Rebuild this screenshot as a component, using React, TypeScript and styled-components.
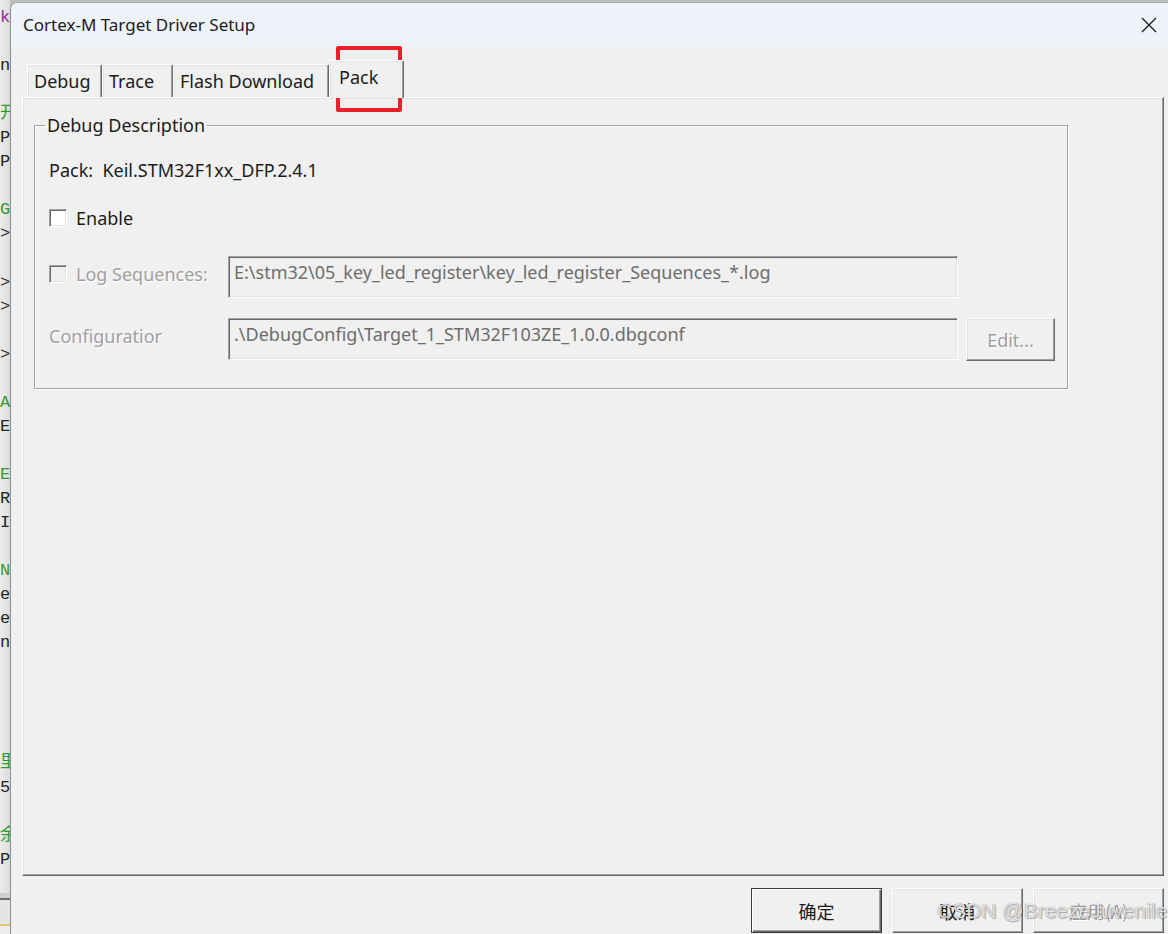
import React from "react";
import styled, { createGlobalStyle } from "styled-components";

const UI_FONT = `"Noto Sans", "Noto Sans CJK SC", sans-serif`;

const Global = createGlobalStyle`
  html, body { margin: 0; padding: 0; background: #bdbdbd; overflow: hidden; }
  #root { width: 1168px; height: 934px; }
`;

const Screen = styled.div`
  position: relative;
  width: 1168px;
  height: 934px;
  display: flex;
  overflow: hidden;
  background: #bdbdbd;
  font-family: ${UI_FONT};
`;

/* ---------- editor behind the dialog ---------- */
const EditorStrip = styled.div`
  width: 10px;
  flex: none;
  overflow: hidden;
  display: flex;
  flex-direction: column;
  padding-top: 6px;
  box-sizing: border-box;
  background: linear-gradient(to right, #ececec, #dcdcdc);
  font-family: "Liberation Mono", "Noto Sans CJK SC", monospace;
  font-size: 17px;
`;

const CodeLine = styled.div<{ $c: string }>`
  height: 24.06px;
  line-height: 24px;
  white-space: nowrap;
  color: ${(p) => p.$c};
`;

const StripFooter = styled.div`
  margin-top: auto;
  height: 41px;
  flex: none;
  background: linear-gradient(
    to bottom,
    #cfcfcf 0 5px,
    #6e6e6e 5px 7px,
    #e4e4e4 7px 31px,
    #e6c36a 31px 33px,
    #ececec 33px
  );
`;

/* ---------- dialog ---------- */
const Dialog = styled.div`
  flex: 1;
  display: flex;
  flex-direction: column;
  margin-top: 2px;
  border-left: 1px solid #8d8d8d;
  border-top: 1px solid #a9a9a9;
  border-top-left-radius: 7px;
  background: #f0f0f0;
  overflow: hidden;
`;

const TitleBar = styled.div`
  height: 44px;
  flex: none;
  display: flex;
  align-items: center;
  justify-content: space-between;
  padding: 0 11px 0 12px;
  background: #eef3f9;
`;

const Title = styled.div`
  font-size: 17px;
  color: #1b1b1b;
  margin-top: -2px;
`;

const CloseIcon = styled.svg`
  width: 16px;
  height: 16px;
  margin-top: -1px;
`;

const Body = styled.div`
  flex: 1;
  display: flex;
  flex-direction: column;
  padding: 13px 4px 1px 11px;
`;

const TabRow = styled.div`
  display: flex;
  align-items: flex-end;
  height: 37px;
  padding-left: 5px;
  position: relative;
  z-index: 1;
`;

const Tab = styled.div<{ $w: number; $active?: boolean }>`
  width: ${(p) => p.$w}px;
  height: ${(p) => (p.$active ? 38 : 33)}px;
  margin-bottom: ${(p) => (p.$active ? -1 : 0)}px;
  box-sizing: border-box;
  display: flex;
  align-items: ${(p) => (p.$active ? "flex-start" : "center")};
  padding-left: ${(p) => (p.$active ? 9 : 6)}px;
  padding-top: ${(p) => (p.$active ? 4 : 0)}px;
  font-size: 18px;
  color: #1b1b1b;
  white-space: nowrap;
  background: #f0f0f0;
  border-top: 1px solid #ffffff;
  border-left: 1px solid #ffffff;
  border-right: 1px solid #696969;
  box-shadow: inset -1px 0 0 #a0a0a0, inset 1px 1px 0 #e3e3e3;
  border-top-left-radius: 2px;
  border-top-right-radius: 2px;
`;

const Panel = styled.div`
  flex: 1;
  box-sizing: border-box;
  border-top: 1px solid #ffffff;
  border-left: 1px solid #ffffff;
  border-right: 1px solid #696969;
  border-bottom: 1px solid #696969;
  box-shadow: inset -1px -1px 0 #a0a0a0, inset 1px 1px 0 #e3e3e3;
  padding: 16px 0 0 11px;
`;

const Group = styled.fieldset`
  width: 1034px;
  box-sizing: border-box;
  margin: 0;
  padding: 0 0 27px 14px;
  border: 1px solid #a0a0a0;
  box-shadow: 1px 1px 0 #ffffff, inset 1px 1px 0 #ffffff;
`;

const Legend = styled.legend`
  margin-left: -4px;
  padding: 0 2px;
  font-size: 18px;
  line-height: 23px;
  color: #1b1b1b;
`;

const TextRow = styled.div<{ $mt: number }>`
  display: flex;
  align-items: center;
  gap: 9px;
  height: 24px;
  margin-top: ${(p) => p.$mt}px;
  font-size: 18px;
  color: #1b1b1b;
  white-space: pre;
`;

const Check = styled.span<{ $disabled?: boolean }>`
  width: 18px;
  height: 18px;
  box-sizing: border-box;
  flex: none;
  background: ${(p) => (p.$disabled ? "#f0f0f0" : "#ffffff")};
  border-top: 1px solid #a0a0a0;
  border-left: 1px solid #a0a0a0;
  border-right: 1px solid #ffffff;
  border-bottom: 1px solid #ffffff;
  box-shadow: inset 1px 1px 0 #696969, inset -1px -1px 0 #e3e3e3;
`;

const FieldGrid = styled.div<{ $mt: number }>`
  display: grid;
  grid-template-columns: 171px 730px 89px;
  column-gap: 8px;
  margin-top: ${(p) => p.$mt}px;
`;

const FieldLabel = styled.div`
  height: 35px;
  display: flex;
  align-items: center;
  gap: 9px;
  font-size: 18px;
  color: #a0a0a0;
  text-shadow: 1px 1px 0 #ffffff;
  white-space: nowrap;
`;

const Field = styled.div`
  height: 42px;
  box-sizing: border-box;
  padding: 3px 5px;
  font-size: 18px;
  line-height: 24px;
  color: #6d6d6d;
  background: #f0f0f0;
  border-top: 1px solid #a0a0a0;
  border-left: 1px solid #a0a0a0;
  border-right: 1px solid #ffffff;
  border-bottom: 1px solid #ffffff;
  box-shadow: inset 1px 1px 0 #696969, inset -1px -1px 0 #e3e3e3;
  white-space: nowrap;
  overflow: hidden;
`;

const EditButton = styled.div`
  height: 43px;
  box-sizing: border-box;
  display: flex;
  align-items: center;
  justify-content: center;
  font-size: 18px;
  color: #a0a0a0;
  text-shadow: 1px 1px 0 #ffffff;
  border-top: 1px solid #ffffff;
  border-left: 1px solid #ffffff;
  border-right: 1px solid #696969;
  border-bottom: 1px solid #696969;
  box-shadow: inset -1px -1px 0 #a0a0a0, inset 1px 1px 0 #e3e3e3;
`;

const ButtonRow = styled.div`
  height: 45px;
  margin-top: 12px;
  flex: none;
  display: flex;
  justify-content: flex-end;
  gap: 10px;
`;

const DlgButton = styled.div<{ $default?: boolean; $disabled?: boolean }>`
  width: 131px;
  height: 45px;
  box-sizing: border-box;
  display: flex;
  align-items: center;
  justify-content: center;
  font-family: "Noto Sans CJK SC", ${UI_FONT};
  font-size: 18px;
  color: ${(p) => (p.$disabled ? "#a0a0a0" : "#1b1b1b")};
  text-shadow: ${(p) => (p.$disabled ? "1px 1px 0 #ffffff" : "none")};
  border: 1px solid;
  border-top-color: ${(p) => (p.$default ? "#3c3c3c" : "#ffffff")};
  border-left-color: ${(p) => (p.$default ? "#3c3c3c" : "#ffffff")};
  border-right-color: ${(p) => (p.$default ? "#3c3c3c" : "#696969")};
  border-bottom-color: ${(p) => (p.$default ? "#3c3c3c" : "#696969")};
  box-shadow: ${(p) =>
    p.$default
      ? "inset 1px 1px 0 #ffffff, inset -1px -1px 0 #696969, inset -2px -2px 0 #a0a0a0"
      : "inset -1px -1px 0 #a0a0a0, inset 1px 1px 0 #e3e3e3"};
`;

/* ---------- overlays ---------- */
const Highlight = styled.div`
  position: absolute;
  left: 336px;
  top: 46px;
  width: 66px;
  height: 66px;
  box-sizing: border-box;
  border: 4px solid #e8202a;
  border-radius: 2px;
  pointer-events: none;
`;

const Watermark = styled.div`
  position: absolute;
  left: 937px;
  top: 898px;
  font-family: "Liberation Sans", Arial, sans-serif;
  font-size: 21px;
  line-height: 26px;
  color: rgba(245, 245, 245, 0.85);
  text-shadow: 0 0 1px rgba(60, 60, 60, 0.7), 1px 1px 1px rgba(0, 0, 0, 0.25);
  white-space: nowrap;
  pointer-events: none;
`;

const codeLines: { t: string; c: string }[] = [
  { t: "k", c: "#9b1fa6" },
  { t: "", c: "#222" },
  { t: "n", c: "#222" },
  { t: "", c: "#222" },
  { t: "开", c: "#2f9a2f" },
  { t: "P", c: "#222" },
  { t: "P", c: "#222" },
  { t: "", c: "#222" },
  { t: "G", c: "#2f9a2f" },
  { t: ">", c: "#333" },
  { t: "", c: "#222" },
  { t: ">", c: "#333" },
  { t: ">", c: "#333" },
  { t: "", c: "#222" },
  { t: ">", c: "#333" },
  { t: "", c: "#222" },
  { t: "A", c: "#2f9a2f" },
  { t: "E", c: "#222" },
  { t: "", c: "#222" },
  { t: "E", c: "#2f9a2f" },
  { t: "R", c: "#222" },
  { t: "I", c: "#222" },
  { t: "", c: "#222" },
  { t: "N", c: "#2f9a2f" },
  { t: "e", c: "#222" },
  { t: "e", c: "#222" },
  { t: "n", c: "#222" },
  { t: "", c: "#222" },
  { t: "", c: "#222" },
  { t: "", c: "#222" },
  { t: "", c: "#222" },
  { t: "里", c: "#2f9a2f" },
  { t: "5", c: "#222" },
  { t: "", c: "#222" },
  { t: "余", c: "#2f9a2f" },
  { t: "P", c: "#222" },
];

export default function App() {
  return (
    <Screen>
      <Global />
      <EditorStrip>
        {codeLines.map((l, i) => (
          <CodeLine key={i} $c={l.c}>
            {l.t}
          </CodeLine>
        ))}
        <StripFooter />
      </EditorStrip>

      <Dialog>
        <TitleBar>
          <Title>Cortex-M Target Driver Setup</Title>
          <CloseIcon viewBox="0 0 16 16">
            <path d="M1 1 L15 15 M15 1 L1 15" stroke="#1b1b1b" strokeWidth="1.3" fill="none" />
          </CloseIcon>
        </TitleBar>

        <Body>
          <TabRow>
            <Tab $w={75}>Debug</Tab>
            <Tab $w={71}>Trace</Tab>
            <Tab $w={156}>Flash Download</Tab>
            <Tab $w={75} $active>
              Pack
            </Tab>
          </TabRow>

          <Panel>
            <Group>
              <Legend>Debug Description</Legend>
              <TextRow $mt={21}>Pack:  Keil.STM32F1xx_DFP.2.4.1</TextRow>
              <TextRow $mt={24}>
                <Check />
                Enable
              </TextRow>
              <FieldGrid $mt={26}>
                <FieldLabel>
                  <Check $disabled />
                  Log Sequences:
                </FieldLabel>
                <Field>E:\stm32\05_key_led_register\key_led_register_Sequences_*.log</Field>
              </FieldGrid>
              <FieldGrid $mt={20}>
                <FieldLabel>Configuratior</FieldLabel>
                <Field>.\DebugConfig\Target_1_STM32F103ZE_1.0.0.dbgconf</Field>
                <EditButton>Edit...</EditButton>
              </FieldGrid>
            </Group>
          </Panel>

          <ButtonRow>
            <DlgButton $default>确定</DlgButton>
            <DlgButton>取消</DlgButton>
            <DlgButton $disabled>应用(A)</DlgButton>
          </ButtonRow>
        </Body>
      </Dialog>

      <Highlight />
      <Watermark>CSDN @BreezeJuvenile</Watermark>
    </Screen>
  );
}
